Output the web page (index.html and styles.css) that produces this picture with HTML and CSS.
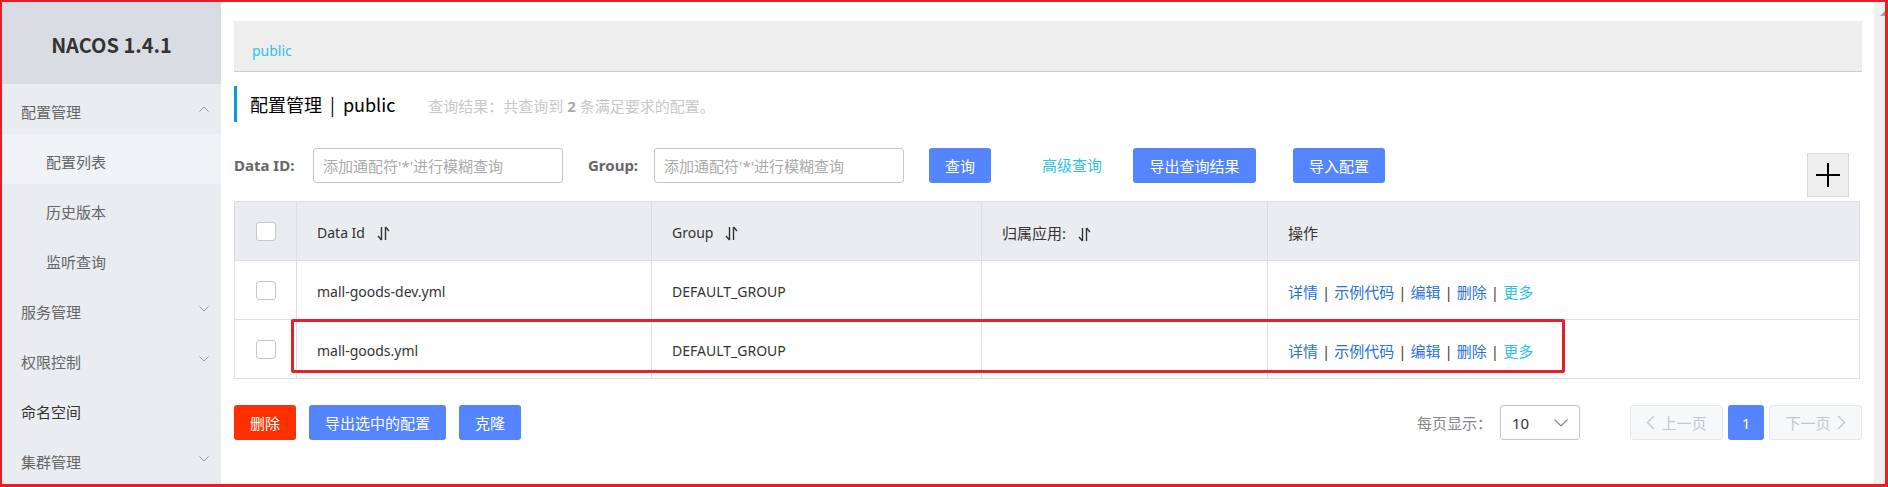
FILE: index.html
```html
<!DOCTYPE html>
<html lang="zh-CN">
<head>
<meta charset="utf-8">
<title>Nacos</title>
<link rel="stylesheet" href="styles.css">
</head>
<body>
<div class="frame">
  <aside class="sidebar">
    <div class="brand">NACOS 1.4.1</div>
    <nav class="menu">
      <div class="item top">配置管理
        <svg class="chev" width="10" height="6" viewBox="0 0 10 6"><path d="M0.5 5.5L5 1l4.5 4.5" fill="none" stroke="#9a9a9a" stroke-width="1"/></svg>
      </div>
      <div class="item sub active">配置列表</div>
      <div class="item sub">历史版本</div>
      <div class="item sub">监听查询</div>
      <div class="item top">服务管理
        <svg class="chev" width="10" height="6" viewBox="0 0 10 6"><path d="M0.5 0.5L5 5l4.5-4.5" fill="none" stroke="#9a9a9a" stroke-width="1"/></svg>
      </div>
      <div class="item top">权限控制
        <svg class="chev" width="10" height="6" viewBox="0 0 10 6"><path d="M0.5 0.5L5 5l4.5-4.5" fill="none" stroke="#9a9a9a" stroke-width="1"/></svg>
      </div>
      <div class="item top dark">命名空间</div>
      <div class="item top">集群管理
        <svg class="chev" width="10" height="6" viewBox="0 0 10 6"><path d="M0.5 0.5L5 5l4.5-4.5" fill="none" stroke="#9a9a9a" stroke-width="1"/></svg>
      </div>
    </nav>
  </aside>

  <main class="main">
    <div class="crumb"><span class="crumb-link">public</span></div>

    <div class="title">
      <span class="title-text">配置管理<span class="bar">|</span>public</span>
      <span class="hint">查询结果：共查询到 <b>2</b> 条满足要求的配置。</span>
    </div>

    <div class="search">
      <label class="lbl">Data ID:</label>
      <div class="input">添加通配符'*'进行模糊查询</div>
      <label class="lbl lbl-group">Group:</label>
      <div class="input">添加通配符'*'进行模糊查询</div>
      <button class="btn btn-query">查询</button>
      <span class="adv">高级查询</span>
      <button class="btn btn-export">导出查询结果</button>
      <button class="btn btn-import">导入配置</button>
      <button class="plus" aria-label="add">
        <svg width="26" height="26" viewBox="0 0 26 26"><path d="M13 1v24M1 13h24" stroke="#000" stroke-width="2"/></svg>
      </button>
    </div>

    <div class="table-wrap">
      <table class="grid">
        <colgroup>
          <col class="c0"><col class="c1"><col class="c2"><col class="c3"><col class="c4">
        </colgroup>
        <thead>
          <tr>
            <th class="cb-cell"><span class="cb"></span></th>
            <th>Data Id<svg class="sort" width="13" height="15" viewBox="0 0 13 15"><path d="M4.5 1v13M4.5 14L1 10M8.5 14V1M8.5 1l3.5 4" fill="none" stroke="#333" stroke-width="1.4"/></svg></th>
            <th>Group<svg class="sort" width="13" height="15" viewBox="0 0 13 15"><path d="M4.5 1v13M4.5 14L1 10M8.5 14V1M8.5 1l3.5 4" fill="none" stroke="#333" stroke-width="1.4"/></svg></th>
            <th class="cjk">归属应用:<svg class="sort" width="13" height="15" viewBox="0 0 13 15"><path d="M4.5 1v13M4.5 14L1 10M8.5 14V1M8.5 1l3.5 4" fill="none" stroke="#333" stroke-width="1.4"/></svg></th>
            <th class="cjk">操作</th>
          </tr>
        </thead>
        <tbody>
          <tr>
            <td class="cb-cell"><span class="cb"></span></td>
            <td>mall-goods-dev.yml</td>
            <td>DEFAULT_GROUP</td>
            <td></td>
            <td class="ops"><a>详情</a><i>|</i><a>示例代码</a><i>|</i><a>编辑</a><i>|</i><a>删除</a><i>|</i><a class="more">更多</a></td>
          </tr>
          <tr>
            <td class="cb-cell"><span class="cb"></span></td>
            <td>mall-goods.yml</td>
            <td>DEFAULT_GROUP</td>
            <td></td>
            <td class="ops"><a>详情</a><i>|</i><a>示例代码</a><i>|</i><a>编辑</a><i>|</i><a>删除</a><i>|</i><a class="more">更多</a></td>
          </tr>
        </tbody>
      </table>
      <div class="highlight"></div>
    </div>

    <div class="footer">
      <button class="btn btn-del">删除</button>
      <button class="btn btn-exsel">导出选中的配置</button>
      <button class="btn btn-clone">克隆</button>
      <div class="pager">
        <span class="per">每页显示：</span>
        <div class="select"><span>10</span>
          <svg width="14" height="8" viewBox="0 0 14 8"><path d="M0.5 0.5L7 7l6.5-6.5" fill="none" stroke="#888" stroke-width="1.2"/></svg>
        </div>
        <div class="pg pg-prev">
          <svg width="9" height="15" viewBox="0 0 9 15"><path d="M8 1L1.5 7.5 8 14" fill="none" stroke="#c4c6cf" stroke-width="1.4"/></svg>
          <span>上一页</span>
        </div>
        <div class="pg pg-cur">1</div>
        <div class="pg pg-next">
          <span>下一页</span>
          <svg width="9" height="15" viewBox="0 0 9 15"><path d="M1 1l6.5 6.5L1 14" fill="none" stroke="#c4c6cf" stroke-width="1.4"/></svg>
        </div>
      </div>
    </div>
  </main>

  <div class="scrollbar"><span class="arrow"></span></div>
</div>
</body>
</html>
```

FILE: styles.css
```css
* { box-sizing: border-box; }

html, body {
  margin: 0;
  padding: 0;
  background: #fff;
}

body {
  font-family: "Noto Sans", "Noto Sans CJK SC", sans-serif;
  color: #333;
}

.frame {
  width: 1888px;
  height: 487px;
  border-style: solid;
  border-color: #ec1c24;
  border-width: 2px 3px 3px 2px;
  display: flex;
  overflow: hidden;
}

/* ---------- sidebar ---------- */
.sidebar {
  width: 219px;
  flex: none;
  background: #e9ecf0;
  display: flex;
  flex-direction: column;
  font-family: "Noto Sans CJK SC", sans-serif;
}

.brand {
  height: 85px;
  background: #d9dde3;
  display: flex;
  align-items: center;
  justify-content: center;
  font-size: 20px;
  font-weight: 700;
  color: #333;
  padding-top: 2px;
}

.menu { display: flex; flex-direction: column; }

.item {
  height: 50px;
  display: flex;
  align-items: center;
  padding-top: 5px;
  font-size: 15px;
  color: #666;
}

.item.top { padding-left: 19px; padding-right: 12px; }
.item.sub { padding-left: 44px; }
.item.active { background: #f0f2f5; }
.item.dark { color: #333; }

.chev { margin-left: auto; margin-top: -6px; }

/* ---------- main ---------- */
.main {
  flex: 1;
  min-width: 0;
  padding: 19px 12px 0 13px;
}

.crumb {
  height: 51px;
  background: #eeeeee;
  border-bottom: 1px solid #cccccc;
  display: flex;
  align-items: center;
  padding: 8px 0 0 18px;
}

.crumb-link {
  font-size: 14px;
  color: #2ec4e1;
}

.title {
  margin-top: 14px;
  height: 36px;
  border-left: 3px solid #1296d4;
  padding-left: 13px;
  display: flex;
  align-items: center;
}

.title-text {
  font-family: "Noto Sans CJK SC", sans-serif;
  font-size: 18px;
  color: #000;
}

.title-text .bar { margin: 0 8px 0 8px; }

.hint {
  margin-left: 33px;
  font-size: 15px;
  color: #c8c8c8;
  padding-top: 2px;
}

.hint b { color: #aaa; }

.search {
  margin-top: 26px;
  display: flex;
  align-items: flex-start;
}

.lbl {
  height: 35px;
  line-height: 35px;
  font-size: 15px;
  font-weight: 700;
  color: #666;
  width: 79px;
}

.lbl-group { width: 66px; margin-left: 25px; }

.input {
  width: 250px;
  height: 35px;
  border: 1px solid #c4c6cf;
  border-radius: 3px;
  padding: 0 9px;
  display: flex;
  align-items: center;
  font-size: 15px;
  color: #aaa;
  white-space: nowrap;
  overflow: hidden;
}

.btn {
  height: 35px;
  border: none;
  border-radius: 3px;
  background: #5584ff;
  color: #fff;
  font-family: "Noto Sans CJK SC", sans-serif;
  font-size: 15px;
  padding: 0;
  cursor: pointer;
}

.btn-query { width: 62px; margin-left: 25px; }

.adv {
  margin-left: 51px;
  height: 35px;
  line-height: 35px;
  font-size: 15px;
  color: #2ec4e1;
}

.btn-export { width: 123px; margin-left: 31px; }
.btn-import { width: 92px; margin-left: 37px; }

.plus {
  margin-left: auto;
  margin-right: 13px;
  margin-top: 5px;
  width: 42px;
  height: 44px;
  background: #eeeeee;
  border: 1px solid #d9d9d9;
  padding: 0;
  display: flex;
  align-items: center;
  justify-content: center;
}

/* ---------- table ---------- */
.table-wrap {
  margin-top: 4px;
  width: 1625px;
  position: relative;
}

.grid {
  width: 100%;
  border-collapse: collapse;
  table-layout: fixed;
  font-size: 14px;
}

.c0 { width: 62px; }
.c1 { width: 355px; }
.c2 { width: 330px; }
.c3 { width: 286px; }
.c4 { width: 592px; }

.grid th, .grid td {
  border: 1px solid #dcdee3;
  height: 59px;
  padding: 2px 18px 0 20px;
  text-align: left;
  font-weight: 400;
  color: #333;
  white-space: nowrap;
}

.grid th { background: #ebecf0; }
.grid .cjk, .grid .ops { font-size: 15px; }

.grid .cb-cell { padding: 0; text-align: center; }

.cb {
  display: inline-block;
  width: 20px;
  height: 19px;
  border: 1px solid #c4c6cf;
  border-radius: 3px;
  background: #fff;
  vertical-align: middle;
}

.sort {
  vertical-align: -3px;
  margin-left: 12px;
}

.ops a { color: #2a72d6; }
.ops a.more { color: #2ec4e1; }
.ops i {
  font-style: normal;
  color: #5a3a2a;
  margin: 0 4px;
}

.highlight {
  position: absolute;
  left: 57px;
  top: 118px;
  width: 1274px;
  height: 54px;
  border: 3px solid #e4212b;
  border-radius: 2px;
  pointer-events: none;
}

/* ---------- footer ---------- */
.footer {
  margin-top: 26px;
  display: flex;
  align-items: center;
}

.btn-del { width: 62px; background: #ff3000; }
.btn-exsel { width: 137px; margin-left: 13px; }
.btn-clone { width: 62px; margin-left: 13px; }

.pager {
  margin-left: auto;
  display: flex;
  align-items: center;
  font-family: "Noto Sans CJK SC", sans-serif;
}

.per {
  font-size: 15px;
  color: #888;
  margin-right: 8px;
}

.select {
  width: 80px;
  height: 35px;
  border: 1px solid #c4c6cf;
  border-radius: 3px;
  display: flex;
  align-items: center;
  justify-content: space-between;
  padding: 0 11px 0 11px;
  font-family: "Noto Sans", sans-serif;
  font-size: 15px;
  color: #333;
}

.pg {
  height: 35px;
  border-radius: 3px;
  display: flex;
  align-items: center;
  justify-content: center;
  font-size: 15px;
}

.pg-prev, .pg-next {
  width: 93px;
  background: #f7f8fa;
  border: 1px solid #e6e7eb;
  color: #c4c6cf;
  gap: 6px;
}

.pg-prev { margin-left: 50px; }

.pg-cur {
  width: 36px;
  margin: 0 5px;
  background: #5584ff;
  color: #fff;
  font-family: "Noto Sans", sans-serif;
}

/* ---------- scrollbar ---------- */
.scrollbar {
  width: 11px;
  flex: none;
  background: #f0f0f0;
  position: relative;
}

.arrow {
  position: absolute;
  right: 0;
  top: 9px;
  width: 0;
  height: 0;
  border-left: 5px solid transparent;
  border-bottom: 5px solid #a3a3a3;
}
```
